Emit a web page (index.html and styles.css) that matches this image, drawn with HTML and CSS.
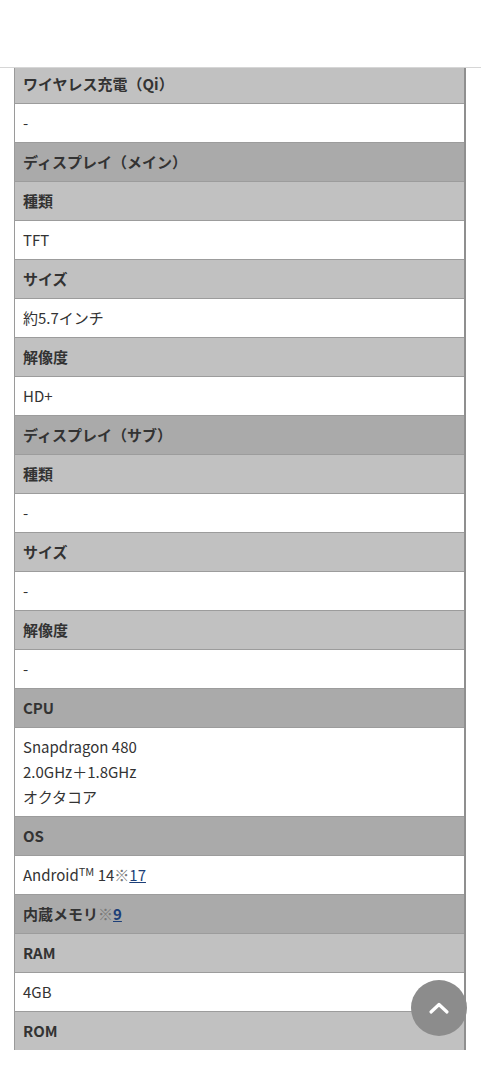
FILE: index.html
```html
<!DOCTYPE html>
<html lang="ja">
<head>
<meta charset="utf-8">
<title>スペック</title>
<link rel="stylesheet" href="styles.css">
</head>
<body>
<header class="site-header"></header>
<main class="content">
  <table class="spec">
    <tbody>
      <tr><th class="sub">ワイヤレス充電（Qi）</th></tr>
      <tr><td>-</td></tr>
      <tr><th class="cat">ディスプレイ（メイン）</th></tr>
      <tr><th class="sub">種類</th></tr>
      <tr><td>TFT</td></tr>
      <tr><th class="sub">サイズ</th></tr>
      <tr><td>約5.7インチ</td></tr>
      <tr><th class="sub">解像度</th></tr>
      <tr><td>HD+</td></tr>
      <tr><th class="cat">ディスプレイ（サブ）</th></tr>
      <tr><th class="sub">種類</th></tr>
      <tr><td>-</td></tr>
      <tr><th class="sub">サイズ</th></tr>
      <tr><td>-</td></tr>
      <tr><th class="sub">解像度</th></tr>
      <tr><td>-</td></tr>
      <tr><th class="cat">CPU</th></tr>
      <tr><td>Snapdragon 480<br>2.0GHz＋1.8GHz<br>オクタコア</td></tr>
      <tr><th class="cat">OS</th></tr>
      <tr><td>Android<sup class="tm">TM</sup> 14<span class="note">※</span><a class="ref" href="#">17</a></td></tr>
      <tr><th class="cat">内蔵メモリ<span class="note">※</span><a class="ref" href="#">9</a></th></tr>
      <tr><th class="sub">RAM</th></tr>
      <tr><td>4GB</td></tr>
      <tr><th class="sub">ROM</th></tr>
    </tbody>
  </table>
</main>
<a class="to-top" href="#" aria-label="ページトップへ">
  <svg width="22" height="14" viewBox="0 0 22 14" aria-hidden="true"><path d="M3 11 L11 3.5 L19 11" fill="none" stroke="#fff" stroke-width="3.2" stroke-linecap="round" stroke-linejoin="round"/></svg>
</a>
</body>
</html>
```

FILE: styles.css
```css
html, body {
  margin: 0;
  padding: 0;
  background: #fff;
}
body {
  font-family: "Noto Sans CJK JP", "Noto Sans", sans-serif;
  color: #333;
  font-size: 15px;
}
.site-header {
  position: fixed;
  top: 0;
  left: 0;
  right: 0;
  height: 67px;
  background: #fff;
  border-bottom: 1px solid #d6d6d6;
  z-index: 5;
}
.content {
  padding: 64px 15px 30px 14px;
}
.spec {
  width: 100%;
  border-collapse: collapse;
  border-left: 1px solid #9a9a9a;
  border-right: 2px solid #8f8f8f;
}
.spec th,
.spec td {
  text-align: left;
  padding: 6px 8px 7px 8px;
  line-height: 25px;
  border-top: 1px solid #9c9c9c;
  font-size: 15px;
}
.spec th {
  font-weight: 700;
  color: #333;
}
.spec td {
  background: #fff;
  font-weight: 400;
  color: #333;
}
.spec th.sub {
  background: #c1c1c1;
}
.spec th.cat {
  background: #aaaaaa;
}
.tm {
  font-size: 11px;
  vertical-align: 5px;
  line-height: 0;
}
.note {
  color: #777;
  font-weight: 400;
}
.ref {
  color: #1d3f78;
  text-decoration: underline;
}
.to-top {
  position: fixed;
  right: 14px;
  bottom: 44px;
  width: 56px;
  height: 56px;
  border-radius: 50%;
  background: #8c8c8c;
  display: flex;
  align-items: center;
  justify-content: center;
  z-index: 6;
}
```
